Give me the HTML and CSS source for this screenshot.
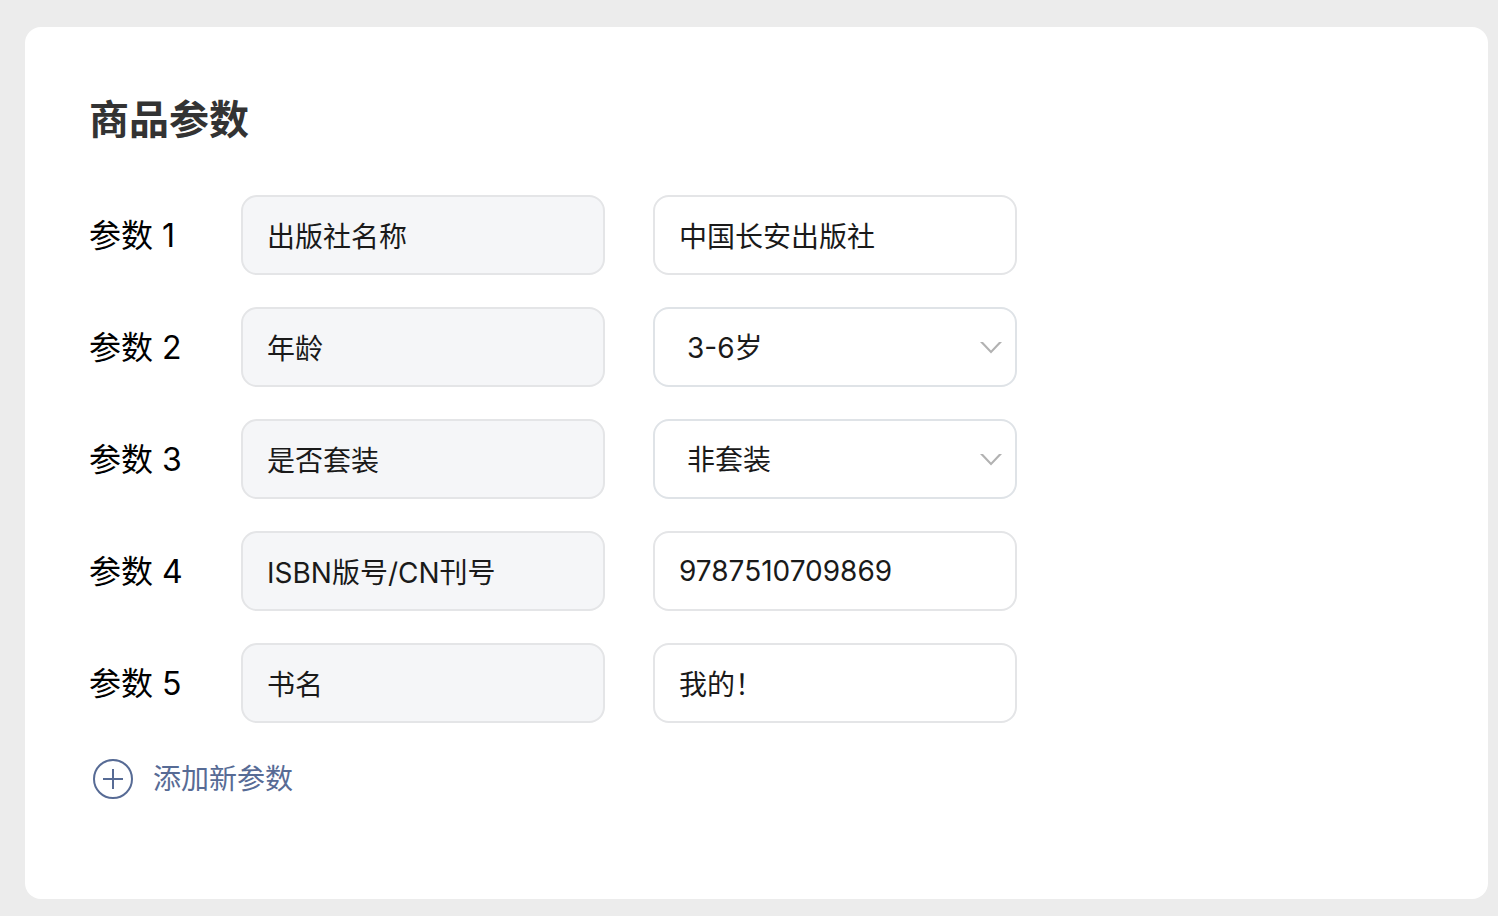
FILE: index.html
```html
<!DOCTYPE html>
<html lang="zh-CN">
<head>
  <meta charset="UTF-8">
  <meta name="viewport" content="width=device-width, initial-scale=1">
  <title>商品参数</title>
  <link rel="stylesheet" href="styles.css">
</head>
<body>
  <form class="card">
    <h2>商品参数</h2>

    <div class="row">
      <label for="value1">参数 1</label>
      <input type="text" class="name" value="出版社名称" aria-label="参数 1 名称" readonly>
      <input type="text" id="value1" value="中国长安出版社">
    </div>

    <div class="row">
      <label for="value2">参数 2</label>
      <input type="text" class="name" value="年龄" aria-label="参数 2 名称" readonly>
      <div class="select">
        <select id="value2">
          <option>3-6岁</option>
        </select>
        <svg class="arrow" viewBox="0 0 22 12" aria-hidden="true"><path d="M0 0h3L11 8.4 19 0H22L11 11.6z"/></svg>
      </div>
    </div>

    <div class="row">
      <label for="value3">参数 3</label>
      <input type="text" class="name" value="是否套装" aria-label="参数 3 名称" readonly>
      <div class="select">
        <select id="value3">
          <option>非套装</option>
          <option>套装</option>
        </select>
        <svg class="arrow" viewBox="0 0 22 12" aria-hidden="true"><path d="M0 0h3L11 8.4 19 0H22L11 11.6z"/></svg>
      </div>
    </div>

    <div class="row">
      <label for="value4">参数 4</label>
      <input type="text" class="name" value="ISBN版号/CN刊号" aria-label="参数 4 名称" readonly>
      <input type="text" id="value4" value="9787510709869">
    </div>

    <div class="row">
      <label for="value5">参数 5</label>
      <input type="text" class="name" value="书名" aria-label="参数 5 名称" readonly>
      <input type="text" id="value5" value="我的！">
    </div>

    <button type="button" class="add">
      <svg viewBox="0 0 40 40" aria-hidden="true"><circle cx="20" cy="20" r="19"/><path d="M10 20h20M20 10v20"/></svg>
      添加新参数
    </button>
  </form>
</body>
</html>
```

FILE: styles.css
```css
* {
  box-sizing: border-box;
}
body {
  margin: 0;
  padding: 27px 10px 17px 25px;
  background: #ececec;
  color: #000;
  font-family: Inter, "Noto Sans CJK SC", sans-serif;
}
.card {
  padding: 64px 64px 96px;
  background: #fff;
  border-radius: 16px;
}
h2 {
  margin: 0 0 46px;
  color: #333;
  font-size: 40px;
  line-height: 58px;
}
.row {
  display: flex;
  align-items: center;
  margin-bottom: 32px;
}
label {
  flex: 0 0 152px;
  padding-top: 2px;
  font-size: 32px;
  line-height: 40px;
}
input, select {
  width: 364px;
  height: 80px;
  padding: 0 24px;
  border: 2px solid #e4e5e7;
  border-radius: 16px;
  background: #fff;
  color: #1a1a1a;
  font-family: inherit;
  font-size: 28px;
}
.name {
  margin-right: 48px;
  background: #f5f6f8;
}
.select {
  position: relative;
}
select {
  display: block;
  padding: 2px 32px 0;
  border-color: #dfe3e7;
  appearance: none;
}
.arrow {
  position: absolute;
  top: 35px;
  right: 15px;
  width: 22px;
  height: 12px;
  fill: #b2b2b2;
  pointer-events: none;
}
.add {
  display: flex;
  align-items: center;
  gap: 20px;
  padding: 0 4px;
  border: 0;
  background: none;
  color: #576b95;
  font-family: inherit;
  font-size: 28px;
  line-height: 48px;
  cursor: pointer;
}
.add svg {
  width: 40px;
  height: 40px;
  fill: none;
  stroke: #576b95;
  stroke-width: 2;
}
```
